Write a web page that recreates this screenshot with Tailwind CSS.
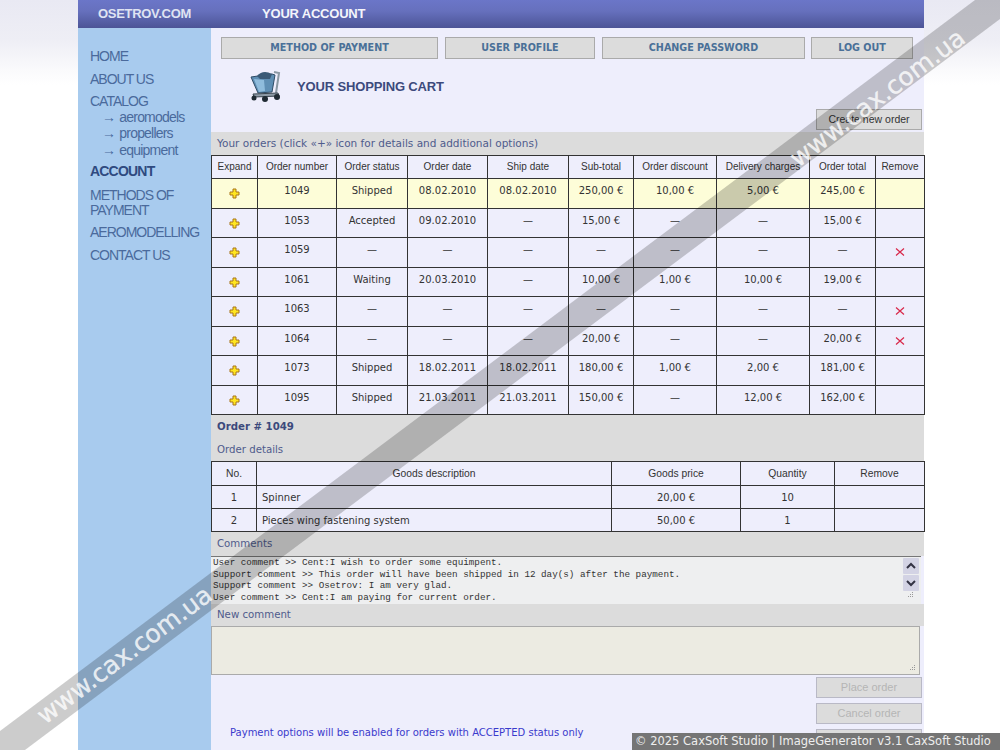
<!DOCTYPE html>
<html lang="en">

<head>
    <meta charset="UTF-8">
    <title>Your account | OSETROV.COM</title>
    <script src="https://cdn.jsdelivr.net/npm/@tailwindcss/browser@4"></script>
</head>

<body class="relative h-[750px] w-[1000px] overflow-hidden bg-white bg-[linear-gradient(180deg,#e9e9f3_0,#eeeef5_40px,#fafafc_70px,#fff_85px)] font-['Liberation_Sans',Arial,sans-serif]">

    <div class="mx-[78px] flex h-[750px] w-[846px] flex-col">
        <!-- Top bar -->
        <header class="flex h-[28px] shrink-0 items-center bg-[linear-gradient(180deg,#6b76c8_0,#6670bd_40%,#4c5496_100%)] text-[13px] font-bold">
            <span class="ml-[20px] w-[164px] tracking-[-0.3px] text-[#dfe3f2]">OSETROV.COM</span>
            <span class="tracking-[-0.2px] text-[#f4f5fb]">YOUR ACCOUNT</span>
        </header>

        <div class="flex min-h-0 flex-1">
            <!-- Left menu -->
            <nav class="w-[133px] shrink-0 bg-[#a8cbee] pl-[12px] pt-[20px] text-[14px] leading-[16px] tracking-[-1px] text-[#4a6a9c]">
                <div>HOME</div>
                <div class="mt-[7px]">ABOUT US</div>
                <div class="mt-[6px]">CATALOG</div>
                <div class="pl-[12px] tracking-[-0.8px]"><span class="mr-[1px]">→</span> aeromodels</div>
                <div class="pl-[12px] tracking-[-0.8px]"><span class="mr-[1px]">→</span> propellers</div>
                <div class="mt-[1px] pl-[12px] tracking-[-0.8px]"><span class="mr-[1px]">→</span> equipment</div>
                <div class="mt-[5px] font-bold text-[#2f4a80] tracking-[-0.8px]">ACCOUNT</div>
                <div class="mt-[9px] leading-[15px]">METHODS OF<br>PAYMENT</div>
                <div class="mt-[6px]">AEROMODELLING</div>
                <div class="mt-[7px]">CONTACT US</div>
            </nav>

            <!-- Main column -->
            <main class="w-[713px] bg-[#eeeefc]">
                <div class="flex pl-[10px] pt-[9px] font-['DejaVu_Sans',sans-serif] text-[9.6px] font-bold text-[#4a7098]">
                    <a class="flex h-[22px] w-[217px] items-center justify-center border border-[#aaaaaa] bg-[#dcdcdc]">METHOD OF PAYMENT</a>
                    <a class="ml-[7px] flex h-[22px] w-[150px] items-center justify-center border border-[#aaaaaa] bg-[#dcdcdc]">USER PROFILE</a>
                    <a class="ml-[7px] flex h-[22px] w-[203px] items-center justify-center border border-[#aaaaaa] bg-[#dcdcdc]">CHANGE PASSWORD</a>
                    <a class="ml-[6px] flex h-[22px] w-[102px] items-center justify-center border border-[#aaaaaa] bg-[#dcdcdc]">LOG OUT</a>
                </div>

                <div class="flex h-[50px] items-start pl-[38px] pt-[11px]">
                    <svg class="h-[33px] w-[32px]" viewBox="0 0 32 33">
                        <path d="M2 7 L23 4 L26 5 L23 22 L9 23 Z" fill="#5f8fb4" stroke="#2f4c66" stroke-width="1"/>
                        <path d="M8 6 Q14 -1 23 4 L21 9 L11 9 Z" fill="#3a5a76"/>
                        <path d="M5 9 L15 10 L16 21 L10 22 Z" fill="#8fbcdc"/>
                        <path d="M25 2 L30 3 L27 23" fill="none" stroke="#8b98a3" stroke-width="2"/>
                        <path d="M4 24 L29 23 L30 26 L5 27 Z" fill="#8d9aa6" stroke="#3a4650" stroke-width="1"/>
                        <circle cx="5" cy="28" r="2.5" fill="#1f2a33"/>
                        <circle cx="16" cy="29" r="3" fill="#1f2a33"/>
                        <circle cx="28" cy="27" r="3" fill="#1f2a33"/>
                    </svg>
                    <h1 class="ml-[16px] mt-[9px] text-[13px] font-bold leading-[16px] tracking-[-0.15px] text-[#3c4a7c]">YOUR SHOPPING CART</h1>
                </div>

                <div class="flex justify-end pr-[2px]">
                    <button class="h-[21px] w-[106px] border border-[#aaaaaa] bg-[#dcdcdc] text-[10.5px] text-[#333333]">Create new order</button>
                </div>

                <div class="mt-[2px] flex h-[23px] items-center bg-[#dcdcdc] pl-[6px] pt-[1px] font-['DejaVu_Sans',sans-serif] text-[10.5px] text-[#4f5b8c]">Your orders (click «+» icon for details and additional options)</div>

                <table class="w-[713px] table-fixed border-collapse bg-[#eeeefc] font-['DejaVu_Sans',sans-serif] text-[10px] text-[#333333]">
                    <colgroup>
                        <col class="w-[46px]"><col class="w-[79px]"><col class="w-[71px]"><col class="w-[80px]"><col class="w-[81px]"><col class="w-[65px]"><col class="w-[83px]"><col class="w-[93px]"><col class="w-[66px]"><col class="w-[49px]">
                    </colgroup>
                    <thead>
                        <tr class="h-[23px] font-['Liberation_Sans',sans-serif] text-[10px]">
                            <th class="border border-[#333333] pb-[2px] font-normal">Expand</th>
                            <th class="border border-[#333333] pb-[2px] font-normal">Order number</th>
                            <th class="border border-[#333333] pb-[2px] font-normal">Order status</th>
                            <th class="border border-[#333333] pb-[2px] font-normal">Order date</th>
                            <th class="border border-[#333333] pb-[2px] font-normal">Ship date</th>
                            <th class="border border-[#333333] pb-[2px] font-normal">Sub-total</th>
                            <th class="border border-[#333333] pb-[2px] font-normal">Order discount</th>
                            <th class="border border-[#333333] pb-[2px] font-normal">Delivery charges</th>
                            <th class="border border-[#333333] pb-[2px] font-normal">Order total</th>
                            <th class="border border-[#333333] pb-[2px] font-normal">Remove</th>
                        </tr>
                    </thead>
                    <tbody id="ordersBody"></tbody>
                </table>

                <div class="flex h-[23px] items-center bg-[#dcdcdc] pl-[6px] font-['DejaVu_Sans',sans-serif] text-[10.2px] font-bold text-[#3c4a7c]">Order # 1049</div>
                <div class="flex h-[23px] items-center bg-[#dcdcdc] pl-[6px] font-['DejaVu_Sans',sans-serif] text-[10.2px] text-[#4f5b8c]">Order details</div>

                <table class="w-[713px] table-fixed border-collapse bg-[#eeeefc] font-['DejaVu_Sans',sans-serif] text-[10px] text-[#333333]">
                    <colgroup>
                        <col class="w-[45px]"><col class="w-[355px]"><col class="w-[129px]"><col class="w-[94px]"><col class="w-[90px]">
                    </colgroup>
                    <tr class="h-[24px] font-['Liberation_Sans',sans-serif] text-[10.3px]">
                        <th class="border border-[#333333] font-normal">No.</th>
                        <th class="border border-[#333333] font-normal">Goods description</th>
                        <th class="border border-[#333333] font-normal">Goods price</th>
                        <th class="border border-[#333333] font-normal">Quantity</th>
                        <th class="border border-[#333333] font-normal">Remove</th>
                    </tr>
                    <tr class="h-[23px] text-center">
                        <td class="border border-[#333333]">1</td>
                        <td class="border border-[#333333] pl-[5px] text-left">Spinner</td>
                        <td class="border border-[#333333]">20,00 €</td>
                        <td class="border border-[#333333]">10</td>
                        <td class="border border-[#333333]"></td>
                    </tr>
                    <tr class="h-[23px] text-center">
                        <td class="border border-[#333333]">2</td>
                        <td class="border border-[#333333] pl-[5px] text-left">Pieces wing fastening system</td>
                        <td class="border border-[#333333]">50,00 €</td>
                        <td class="border border-[#333333]">1</td>
                        <td class="border border-[#333333]"></td>
                    </tr>
                </table>

                <div class="flex h-[24px] items-center bg-[#dcdcdc] pl-[6px] font-['DejaVu_Sans',sans-serif] text-[10.2px] text-[#4f5b8c]">Comments</div>

                <!-- Read only comments box -->
                <div class="relative h-[48px] w-[710px] overflow-hidden border-t border-[#777777] bg-[#eeeff0] pl-[2px] font-['Liberation_Mono',monospace] text-[9.27px] leading-[11.7px] text-[#333333]">
                    <div>User comment &gt;&gt; Cent:I wish to order some equimpent.</div>
                    <div>Support comment &gt;&gt; This order will have been shipped in 12 day(s) after the payment.</div>
                    <div>Support comment &gt;&gt; Osetrov: I am very glad.</div>
                    <div>User comment &gt;&gt; Cent:I am paying for current order.</div>
                    <div class="absolute right-[2px] top-[1px] flex w-[16px] flex-col gap-[1px]">
                        <svg class="h-[16px] w-[16px]" viewBox="0 0 16 16"><rect width="16" height="16" rx="1" fill="#d3d3e4"/><path d="M4 10 L8 6 L12 10" fill="none" stroke="#334" stroke-width="2"/></svg>
                        <svg class="h-[16px] w-[16px]" viewBox="0 0 16 16"><rect width="16" height="16" rx="1" fill="#d3d3e4"/><path d="M4 6 L8 10 L12 6" fill="none" stroke="#334" stroke-width="2"/></svg>
                    </div>
                    <svg class="absolute bottom-[5px] right-[7px] h-[7px] w-[7px]" viewBox="0 0 7 7" fill="#999"><rect x="5" y="0" width="1" height="1"/><rect x="3" y="2" width="1" height="1"/><rect x="5" y="2" width="1" height="1"/><rect x="1" y="4" width="1" height="1"/><rect x="3" y="4" width="1" height="1"/><rect x="5" y="4" width="1" height="1"/></svg>
                </div>

                <div class="flex h-[22px] items-center bg-[#dcdcdc] pl-[6px] font-['DejaVu_Sans',sans-serif] text-[10.2px] text-[#4f5b8c]">New comment</div>

                <div class="relative h-[49px] w-[709px] border border-[#aaaaaa] bg-[#ecebe2]">
                    <svg class="absolute bottom-[2px] right-[3px] h-[7px] w-[7px]" viewBox="0 0 7 7" fill="#999"><rect x="5" y="0" width="1" height="1"/><rect x="3" y="2" width="1" height="1"/><rect x="5" y="2" width="1" height="1"/><rect x="1" y="4" width="1" height="1"/><rect x="3" y="4" width="1" height="1"/><rect x="5" y="4" width="1" height="1"/></svg>
                </div>

                <div class="flex justify-between pr-[2px]">
                    <p class="pl-[19px] pt-[51px] font-['DejaVu_Sans',sans-serif] text-[10px] leading-[14px] text-[#3a3acc]">Payment options will be enabled for orders with ACCEPTED status only</p>
                    <div class="flex w-[106px] flex-col gap-[5px] pt-[2px] text-[11px] text-[#b5b5b5]">
                        <button class="h-[21px] border border-[#b9b9c6] bg-[#dcdcdc]">Place order</button>
                        <button class="h-[21px] border border-[#b9b9c6] bg-[#dcdcdc]">Cancel order</button>
                        <button class="h-[21px] border border-[#b9b9c6] bg-[#dcdcdc]"></button>
                    </div>
                </div>
            </main>
        </div>
    </div>

    <!-- Watermark stripe over the whole page -->
    <svg class="pointer-events-none absolute inset-0 h-[750px] w-[1000px]" viewBox="0 0 1000 750">
        <polygon points="0,731 975,0 1000,0 1000,19 25,750 0,750" fill="#000" fill-opacity="0.2"/>
        <g font-family="DejaVu Sans, sans-serif" font-size="25" fill="#fff" fill-opacity="0.8" stroke="#fff" stroke-opacity="0.5" stroke-width="0.5">
            <text transform="translate(45,725) rotate(-36.87)">www.cax.com.ua</text>
            <text transform="translate(798,168) rotate(-36.87)">www.cax.com.ua</text>
        </g>
    </svg>

    <div class="absolute bottom-0 right-0 flex h-[17px] w-[368px] items-center whitespace-nowrap bg-[#757575] pl-[3px] font-['DejaVu_Sans',sans-serif] text-[11.5px] text-[#eeeeee]">© 2025 CaxSoft Studio | ImageGenerator v3.1 CaxSoft Studio</div>

    <script>
        const dash = '—';
        const orders = [
            ['1049', 'Shipped', '08.02.2010', '08.02.2010', '250,00 €', '10,00 €', '5,00 €', '245,00 €', false, 30],
            ['1053', 'Accepted', '09.02.2010', dash, '15,00 €', dash, dash, '15,00 €', false, 29],
            ['1059', dash, dash, dash, dash, dash, dash, dash, true, 30],
            ['1061', 'Waiting', '20.03.2010', dash, '10,00 €', '1,00 €', '10,00 €', '19,00 €', false, 29],
            ['1063', dash, dash, dash, dash, dash, dash, dash, true, 30],
            ['1064', dash, dash, dash, '20,00 €', dash, dash, '20,00 €', true, 29],
            ['1073', 'Shipped', '18.02.2011', '18.02.2011', '180,00 €', '1,00 €', '2,00 €', '181,00 €', false, 30],
            ['1095', 'Shipped', '21.03.2011', '21.03.2011', '150,00 €', dash, '12,00 €', '162,00 €', false, 29]
        ];

        const plusIcon = `<svg class="mx-auto block h-[11px] w-[11px]" viewBox="0 0 11 11"><path d="M4 1 H7 V4 H10 V7 H7 V10 H4 V7 H1 V4 H4 Z" fill="#ffe620" stroke="#a8741a" stroke-width="1"/></svg>`;
        const removeIcon = `<svg class="mx-auto mb-[1px] block h-[8px] w-[10px]" viewBox="0 0 10 8"><path d="M1 0.5 L9 7.5 M9 0.5 L1 7.5" stroke="#d8284a" stroke-width="1.2"/></svg>`;

        document.getElementById('ordersBody').innerHTML = orders.map((order, index) => {
            const cells = order.slice(0, 8).map(value =>
                `<td class="border border-[#333333] pb-[6px] text-center">${value}</td>`
            ).join('');
            const rowClass = order[9] === 30 ? 'h-[30px]' : 'h-[29px]';
            const bg = index === 0 ? 'bg-[#fdfdd8]' : '';
            return `<tr class="${rowClass} ${bg}">
                <td class="border border-[#333333]">${plusIcon}</td>
                ${cells}
                <td class="border border-[#333333]">${order[8] ? removeIcon : ''}</td>
            </tr>`;
        }).join('');
    </script>
</body>

</html>
